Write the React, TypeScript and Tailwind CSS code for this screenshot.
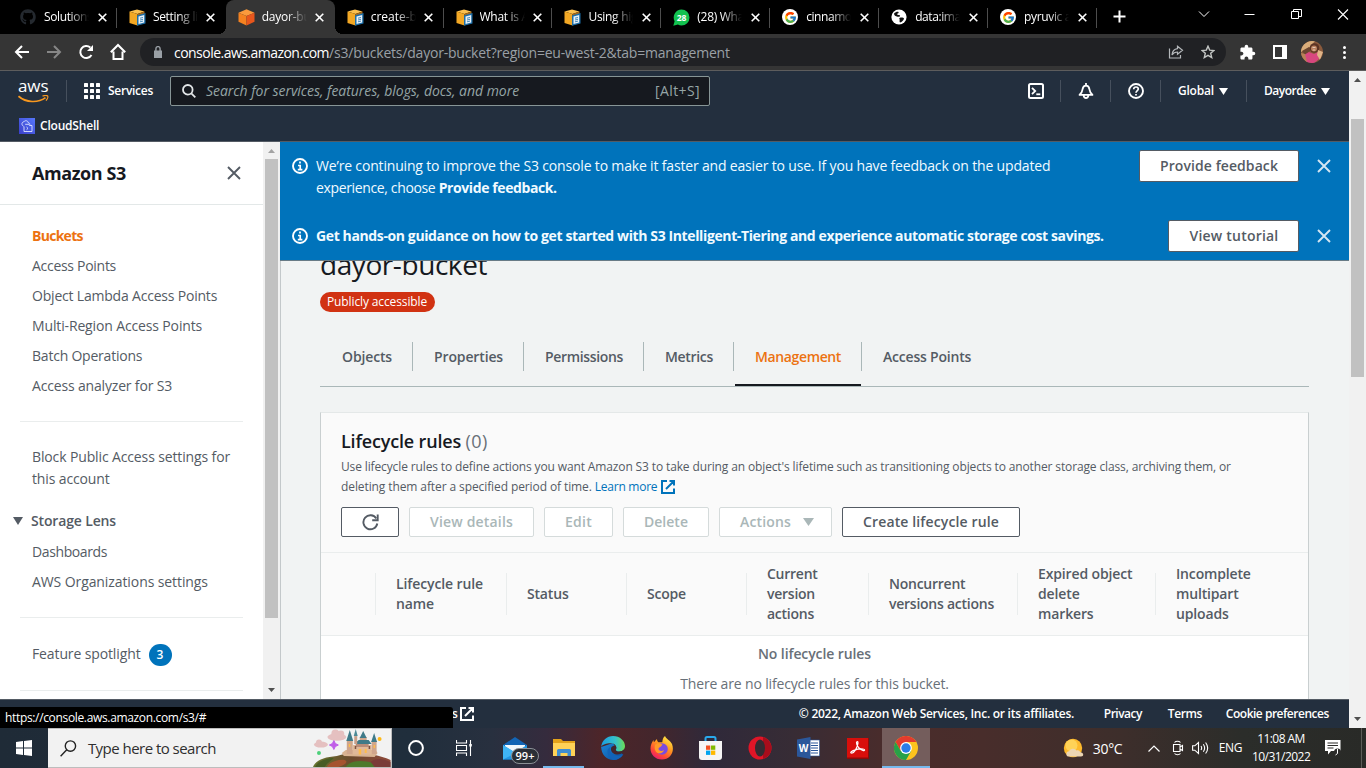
import type { ReactNode } from 'react';
import { FaGithub } from 'react-icons/fa';
import { FcGoogle } from 'react-icons/fc';
import { MdExtension } from 'react-icons/md';

/* ---------- browser chrome ---------- */

const DocsIcon = () => (
  <svg width="17" height="17" viewBox="0 0 17 17" className="block shrink-0">
    <path d="M0.500 2.500 8 0.500 15.500 2.500 8.500 5z" fill="#fbc04e" />
    <path d="M0.500 2.500 8.500 5v11.500L0.500 14z" fill="#f3a824" />
    <path d="M8.500 5 15.500 2.500v11L8.500 16.500z" fill="#a86a1b" />
    <path d="M8 6.500 16.500 4v10.500L8 16.800z" fill="#1c6ea8" />
    <path d="M9.500 7.500 15.200 6v7.500L9.500 15z" fill="#e8f2fa" />
    <path d="M11 9.200l3-.7M11 11l3-.7M11 12.800l3-.7" stroke="#1c6ea8" strokeWidth="0.800" />
  </svg>
);
const CubeIcon = () => (
  <svg width="17" height="17" viewBox="0 0 17 17" className="block shrink-0">
    <path d="M8.500 0.300 16.500 3.800 8.500 7 0.500 3.800z" fill="#fb9a3c" />
    <path d="M0.500 3.800 8.500 7v9.500L0.500 12.800z" fill="#f58220" />
    <path d="M16.500 3.800 8.500 7v9.500l8-3.700z" fill="#e8561c" />
  </svg>
);
const WhatsIcon = () => (
  <svg width="17" height="17" viewBox="0 0 17 17" className="block shrink-0">
    <path d="M8.500 0.500a8 8 0 0 1 0 16 8 8 0 0 1-3.600-.9L0.300 16.700l1.300-4.500A8 8 0 0 1 8.500 0.500z" fill="#12c24f" />
    <text x="8.500" y="11.500" fontSize="8.500" fontWeight="700" fill="#fff" textAnchor="middle" fontFamily="Open Sans, sans-serif">28</text>
  </svg>
);
const GoogleIcon = () => (
  <span className="flex size-4 shrink-0 items-center justify-center rounded-full bg-white">
    <FcGoogle size={13} />
  </span>
);
const GlobeIcon = () => (
  <svg width="16" height="16" viewBox="0 0 16 16" className="block shrink-0">
    <circle cx="8" cy="8" r="7.600" fill="#fff" />
    <path d="M3 4.500c1.500-1.500 3.500-2 4.500-1.500.5 1-.5 1.500-1.500 2 .5 1.500 2 .5 3 1.500.5 1-1 1.500-2.500 1.200C4.500 7.300 3 6.500 3 4.500zM8.500 9c1.500-.8 4-.5 4.500.5-.5 2-2 3.500-4 4-.8-1-.3-2-.3-2.700C8.600 10.200 8 9.700 8.500 9z" fill="#111" />
  </svg>
);
const GithubIcon = () => <FaGithub size={16} className="shrink-0 text-[#24292f]" />;

type BrowserTab = { icon: ReactNode; title: string; track: string; line?: boolean; active?: boolean };
const browserTabs: BrowserTab[] = [
  { icon: <GithubIcon />, title: 'Solutions', track: 'tracking-[-0.38px]', line: true },
  { icon: <DocsIcon />, title: 'Setting life', track: 'tracking-[-0.3px]' },
  { icon: <CubeIcon />, title: 'dayor-buc', track: 'tracking-[-0.25px]', active: true },
  { icon: <DocsIcon />, title: 'create-buc', track: 'tracking-[0px]', line: true },
  { icon: <DocsIcon />, title: 'What is Am', track: 'tracking-[-0.3px]', line: true },
  { icon: <DocsIcon />, title: 'Using high', track: 'tracking-[-0.3px]', line: true },
  { icon: <WhatsIcon />, title: '(28) What', track: 'tracking-[-0.3px]', line: true },
  { icon: <GoogleIcon />, title: 'cinnamon', track: 'tracking-[-0.45px]', line: true },
  { icon: <GlobeIcon />, title: 'data:image', track: 'tracking-[-0.4px]', line: true },
  { icon: <GoogleIcon />, title: 'pyruvic ac', track: 'tracking-[-0.34px]', line: true },
];

const TabStrip = () => (
  <div className="flex h-[34px] items-stretch bg-black pl-2 text-white">
    {browserTabs.map((t) => (
      <div
        key={t.title}
        className={`relative flex w-[108.900px] shrink-0 items-center pl-3 ${t.active ? 'rounded-t-lg bg-[#353535]' : ''}`}
      >
        {t.active && (
          <>
            <span className="absolute bottom-0 -left-2 size-2 bg-[radial-gradient(circle_at_0_0,transparent_8px,#353535_8px)]" />
            <span className="absolute -right-2 bottom-0 size-2 bg-[radial-gradient(circle_at_100%_0,transparent_8px,#353535_8px)]" />
          </>
        )}
        <span className="flex w-6 shrink-0">{t.icon}</span>
        <span className={`w-[45px] overflow-hidden text-[12px] leading-[34px] whitespace-nowrap [mask-image:linear-gradient(to_right,#000_55%,transparent_100%)] ${t.track}`}>
          {t.title}
        </span>
        <svg width="9" height="9" viewBox="0 0 9 9" className="ml-[8.500px] shrink-0">
          <path d="M0.700 0.700l7.600 7.600M8.300 0.700L0.700 8.300" stroke="#fff" strokeWidth="1.600" />
        </svg>
        {t.line && <span className="absolute top-2 right-0 h-5 w-px bg-[#4d4d4d]" />}
      </div>
    ))}
    <svg width="13" height="13" viewBox="0 0 13 13" className="mt-[10px] ml-4">
      <path d="M6.500 0.500v12M0.500 6.500h12" stroke="#fff" strokeWidth="2" />
    </svg>
    <div className="ml-auto flex pr-[17px]">
      <svg width="12" height="34" viewBox="0 0 12 34" className="mr-[34px]"><path d="M1 11.500l5 5 5-5" fill="none" stroke="#fff" /></svg>
      <svg width="11" height="34" viewBox="0 0 11 34" className="mr-9"><path d="M0.500 14.500h10" stroke="#fff" /></svg>
      <svg width="11" height="34" viewBox="0 0 11 34" className="mr-[35px]"><path d="M0.500 11.500h7v7h-7zM2.500 11.500v-2h8v7h-3" fill="none" stroke="#fff" /></svg>
      <svg width="12" height="34" viewBox="0 0 12 34"><path d="M1 9.500l10 10M11 9.500l-10 10" stroke="#fff" strokeWidth="1.100" /></svg>
    </div>
  </div>
);

const Avatar = () => (
  <svg width="22" height="22" viewBox="0 0 22 22" className="block">
    <clipPath id="face"><circle cx="11" cy="11" r="11" /></clipPath>
    <g clipPath="url(#face)">
      <path d="M0 0h22v22H0z" fill="#8a5a3c" />
      <path d="M0 5l8-5h6l-5 6-9 5z" fill="#d9ad7a" />
      <path d="M1 10l7-4 2 3-6 5z" fill="#6b4630" />
      <circle cx="13.500" cy="7" r="4.800" fill="#5c3424" />
      <circle cx="13" cy="7.600" r="3" fill="#b9805e" />
      <path d="M11.500 6.500h3M11.800 9h2.400" stroke="#f0d9c8" strokeWidth="0.800" />
      <path d="M3 14l5-3 5 2 4-2 1 7-6 5-7-1z" fill="#d8477f" />
      <path d="M17 9l5 2-3 8-3-5z" fill="#e0b487" />
      <path d="M0 12l4 1 2 8H0z" fill="#b98158" />
    </g>
  </svg>
);

const Toolbar = () => (
  <div className="flex h-[37px] items-center border-b border-[#5d5d5d] bg-[#353535] pr-5 pl-[14px]">
    <svg width="112" height="20" viewBox="0 0 112 20" fill="none" stroke="#fff" strokeWidth="2">
      <path d="M15 10H2.500M8 4l-6 6 6 6" />
      <path d="M33 10h12.500M40 4l6 6-6 6" stroke="#868686" />
      <path d="M77.500 13A6 6 0 1 1 76.300 5.500" />
      <path d="M79 3v6h-6z" fill="#fff" stroke="none" />
      <path d="M99.500 9.500v7.500h9V9.500M96.800 10.200L104 3l7.200 7.200" />
    </svg>
    <div className="ml-[14px] flex h-7 w-[1086px] items-center rounded-full bg-[#202124] pr-[11px] pl-[14px] text-[14px] whitespace-nowrap">
      <svg width="8" height="12" viewBox="0 0 8 12"><path d="M0 4.500h8V12H0z" fill="#9aa0a6" /><path d="M1.900 5V2.700a2.100 2.100 0 0 1 4.200 0V5" fill="none" stroke="#9aa0a6" strokeWidth="1.400" /></svg>
      <span className="ml-3 tracking-[-0.53px] text-white">console.aws.amazon.com</span>
      <span className="tracking-[-0.22px] text-[#9aa0a6]">/s3/buckets/dayor-bucket?region=eu-west-2&amp;tab=management</span>
      <svg width="16" height="16" viewBox="0 0 16 16" className="ml-auto" fill="none" stroke="#b4b7ba" strokeWidth="1.200">
        <path d="M1.500 4.500v9.500h11v-3" />
        <path d="M9.500 2.200l5 4-5 4V8C7 8 5.200 9 4 11c.3-3.500 2.500-6 5.500-6.300z" />
      </svg>
      <svg width="14" height="14" viewBox="0 0 14 14" className="ml-[17px]" fill="none" stroke="#c4c7c5" strokeWidth="1.400">
        <path d="M7 1.200l1.700 3.900 4.200.4-3.200 2.800 1 4.200L7 10.300l-3.700 2.200 1-4.200L1.100 5.500l4.200-.4z" />
      </svg>
    </div>
    <MdExtension size={17} className="ml-[13px] text-white" />
    <svg width="14" height="14" viewBox="0 0 14 14" className="ml-[17px]"><path d="M1 1h12v12H1z" fill="none" stroke="#fff" strokeWidth="2" /><path d="M9 0h5v14H9z" fill="#fff" /></svg>
    <div className="ml-[14px]"><Avatar /></div>
    <svg width="3" height="13" viewBox="0 0 3 13" className="ml-auto" fill="#fff"><circle cx="1.500" cy="1.500" r="1.500" /><circle cx="1.500" cy="6.500" r="1.500" /><circle cx="1.500" cy="11.500" r="1.500" /></svg>
  </div>
);

/* ---------- AWS header ---------- */

const Rule = ({ gap }: { gap: string }) => <span className={`h-[22px] w-px bg-[#46505d] ${gap}`} />;
const Caret = ({ className = '' }: { className?: string }) => (
  <svg width="9" height="7" viewBox="0 0 9 7" className={className}><path d="M0 0h9L4.500 7z" fill="currentColor" /></svg>
);

const AwsHeader = () => (
  <header className="h-[71px] shrink-0 border-b border-[#545b64] bg-[#232f3e] text-white">
    <div className="flex h-10 items-center pl-[18px]">
      <div className="w-[31px]">
        <div className="h-[15px] text-[17px] leading-[12px] font-medium tracking-[-0.1px]">aws</div>
        <svg width="31" height="8" viewBox="0 0 31 8" className="block" fill="none" stroke="#f7981f" strokeWidth="1.700">
          <path d="M0.500 1.200C8 7.800 20 8.200 27.500 2.600" />
          <path d="M24.500 1.200c2-.8 4.600-.7 5.200 0 .4.700-.3 3-1.700 4.400" strokeWidth="1.300" />
        </svg>
      </div>
      <Rule gap="ml-[17px]" />
      <svg width="16" height="16" viewBox="0 0 16 16" className="ml-[17px]" fill="#fff">
        {[0, 6, 12].map((y) => [0, 6, 12].map((x) => <rect key={`${x}${y}`} x={x} y={y} width="4" height="4" rx="0.600" />))}
      </svg>
      <span className="ml-2 w-[62px] text-[12px] font-semibold tracking-[-0.27px]">Services</span>
      <div className="flex h-[30px] w-[540px] items-center rounded-[2px] border border-[#879596] bg-[#16191f] pr-[9px] pl-[11px] text-[14px] whitespace-nowrap text-[#95a5a6]">
        <svg width="14" height="14" viewBox="0 0 14 14" fill="none" stroke="#e3e6e8" strokeWidth="1.800"><circle cx="5.800" cy="5.800" r="4.800" /><path d="M9.300 9.300l4 4" /></svg>
        <span className="mb-px ml-[10px] tracking-[-0.04px] italic">Search for services, features, blogs, docs, and more</span>
        <span className="mb-px ml-auto tracking-[0.38px]">[Alt+S]</span>
      </div>
      <svg width="16" height="16" viewBox="0 0 16 16" className="ml-[318px]" fill="none" stroke="#fff" strokeWidth="2"><rect x="1" y="1" width="14" height="14" rx="1.500" /><path d="M4 4.800l3.200 3.200L4 11.200" strokeWidth="1.800" /><path d="M8.300 11.300h4" strokeWidth="1.800" /></svg>
      <Rule gap="ml-4" />
      <svg width="16" height="16" viewBox="0 0 16 16" className="ml-[17px]" fill="none" stroke="#fff" strokeWidth="1.800"><path d="M8 0v2.200M.8 11.800h14.400M1.800 11.500C4.200 9.500 4.200 8 4.500 6.300 4.900 4.100 6.200 2.600 8 2.600s3.100 1.500 3.500 3.700c.3 1.700.3 3.200 2.700 5.200M5.600 12.300c.2 1.600 1 2.700 2.400 2.700s2.200-1.100 2.400-2.700" /></svg>
      <Rule gap="ml-4" />
      <svg width="16" height="16" viewBox="0 0 16 16" className="ml-[17px]" fill="none" stroke="#fff" strokeWidth="1.900"><circle cx="8" cy="8" r="7" /><path d="M5.700 6.300C5.700 4.900 6.600 4 8 4s2.300.9 2.300 2.100C10.300 7.500 8 7.700 8 9.800" strokeWidth="1.700" /><path d="M8 10.900v1.600" strokeWidth="1.700" /></svg>
      <Rule gap="ml-4" />
      <span className="ml-[17px] w-[41px] text-[12px] font-semibold tracking-[-0.22px]">Global</span>
      <Caret />
      <Rule gap="ml-[18px]" />
      <span className="ml-[17px] w-[57px] text-[12px] font-semibold tracking-[-0.5px]">Dayordee</span>
      <Caret />
    </div>
    <div className="flex h-[30px] items-center pl-[19px]">
      <svg width="16" height="16" viewBox="0 0 16 16" fill="none" stroke="#dfe3ff" strokeWidth="0.900">
        <defs><linearGradient id="cs" x1="0" y1="1" x2="1" y2="0"><stop stopColor="#3b3fc9" /><stop offset="1" stopColor="#5577fb" /></linearGradient></defs>
        <path d="M0 0h16v16H0z" fill="url(#cs)" stroke="none" />
        <path d="M4.500 8.300C2.300 7 2.500 4.200 4.800 3.800c1.400-1.900 4.300-1.100 4.500 1 1.200.1 1.700.9 1.600 1.900M5 8.500v5h8V7.500h-2.500L9.800 6.300H6.200M7.500 9l1.500 1.400-1.500 1.400" />
      </svg>
      <span className="ml-[5px] text-[12px] font-semibold tracking-[-0.2px]">CloudShell</span>
    </div>
  </header>
);

/* ---------- sidebar ---------- */

const CloseX = ({ className }: { className: string }) => (
  <svg width="14" height="14" viewBox="0 0 14 14" className={className} fill="none" stroke="currentColor" strokeWidth="1.900"><path d="M1 1l12 12M13 1L1 13" /></svg>
);

const links = [
  { label: 'Buckets', cls: 'font-bold text-[#ec7211] tracking-[-0.72px]' },
  { label: 'Access Points', cls: 'tracking-[-0.29px]' },
  { label: 'Object Lambda Access Points', cls: 'tracking-[-0.2px]' },
  { label: 'Multi-Region Access Points', cls: 'tracking-[-0.14px]' },
  { label: 'Batch Operations', cls: 'tracking-[-0.22px]' },
  { label: 'Access analyzer for S3', cls: 'tracking-[-0.17px]' },
];
const Divider = ({ gap }: { gap: string }) => <div className={`mr-5 ml-5 h-px bg-[#eaeded] ${gap}`} />;

const Sidebar = () => (
  <aside className="flex w-[281px] shrink-0 overflow-hidden border-r border-[#c3c8ca] bg-white text-[14px] leading-[22px] text-[#545b64]">
    <div className="w-[263px] whitespace-nowrap">
      <div className="flex h-[63px] items-center justify-between border-b border-[#e3e8e8] pr-[22px] pl-8">
        <span className="text-[18px] font-bold tracking-[-0.42px] text-[#16191f]">Amazon S3</span>
        <CloseX className="text-[#545b64]" />
      </div>
      <nav className="flex flex-col gap-2 pt-5 pl-8">
        {links.map((l) => <a key={l.label} className={l.cls}>{l.label}</a>)}
      </nav>
      <Divider gap="mt-6" />
      <div className="pt-6 pl-8 tracking-[-0.13px]">Block Public Access settings for<br />this account</div>
      <div className="mt-5 flex items-center pl-[13px] font-semibold">
        <svg width="10" height="8" viewBox="0 0 10 8"><path d="M0 0h10L5 8z" fill="#545b64" /></svg>
        <span className="ml-2 tracking-[-0.15px]">Storage Lens</span>
      </div>
      <div className="mt-[9px] pl-8 tracking-[-0.39px]">Dashboards</div>
      <div className="mt-2 pl-8 tracking-[-0.09px]">AWS Organizations settings</div>
      <Divider gap="mt-6" />
      <div className="mt-[25px] flex items-center pl-8">
        <span className="mb-px tracking-[-0.12px]">Feature spotlight</span>
        <span className="ml-2 flex h-[22px] w-[23px] items-center justify-center rounded-full bg-[#0073bb] text-[12px] font-semibold text-white">3</span>
      </div>
      <Divider gap="mt-6" />
    </div>
    <div className="flex w-[17px] flex-col items-center bg-[#f1f1f1]">
      <svg width="7" height="4" viewBox="0 0 7 4" className="mt-[7px]"><path d="M0 4h7L3.500 0z" fill="#a3a3a3" /></svg>
      <div className="mt-[6px] h-[459px] w-[13px] bg-[#c1c1c1]" />
      <svg width="7" height="4" viewBox="0 0 7 4" className="mt-[70px]"><path d="M0 0h7L3.500 4z" fill="#505050" /></svg>
    </div>
  </aside>
);

/* ---------- main content ---------- */

const InfoIcon = () => (
  <svg width="16" height="16" viewBox="0 0 16 16" className="mt-[3px] shrink-0" fill="none" stroke="#fff" strokeWidth="1.900"><circle cx="8" cy="8" r="7" /><path d="M8 3.500v2M6 7.500h2.200v4M5.800 11.700h4.600" strokeWidth="1.700" /></svg>
);

const Flashbar = () => (
  <div className="relative z-10 -ml-px h-[119px] shrink-0 border-b border-[#687b86] bg-[#0073bb] pl-3 text-[14px] leading-[22px] whitespace-nowrap text-[#f1faff]">
    <div className="flex h-[70px] items-start pt-[13px]">
      <InfoIcon />
      <p className="ml-2 w-[823px] font-medium">
        <span className="tracking-[-0.17px]">We’re continuing to improve the S3 console to make it faster and easier to use. If you have feedback on the updated</span><br />
        <span className="tracking-[-0.36px]">experience, choose </span><b className="font-bold tracking-[-0.4px]">Provide feedback.</b>
      </p>
      <button className="-mt-[5px] h-8 w-[160px] rounded-[2px] border border-[#545b64] bg-white text-center font-semibold tracking-[0.08px] text-[#545b64]">Provide feedback</button>
      <CloseX className="mt-1 ml-[18px] text-[#d4e6f2]" />
    </div>
    <div className="flex items-start pt-[13px]">
      <InfoIcon />
      <p className="ml-2 w-[852px] font-bold tracking-[-0.38px]">Get hands-on guidance on how to get started with S3 Intelligent-Tiering and experience automatic storage cost savings.</p>
      <button className="-mt-[5px] h-8 w-[131px] rounded-[2px] border border-[#545b64] bg-white pl-px text-center font-semibold tracking-[0.21px] text-[#545b64]">View tutorial</button>
      <CloseX className="mt-1 ml-[18px] text-[#d4e6f2]" />
    </div>
  </div>
);

const pageTabs = [
  { label: 'Objects', cls: 'w-[93px] pl-[22px] tracking-[-0.14px] border-r' },
  { label: 'Properties', cls: 'w-[111px] pl-[21px] tracking-[-0.13px] border-r' },
  { label: 'Permissions', cls: 'w-[120px] pl-[21px] tracking-[-0.34px] border-r' },
  { label: 'Metrics', cls: 'w-[90px] pl-[21px] tracking-[-0.32px] border-r' },
  { label: 'Management', cls: 'w-[128px] pl-[21px] tracking-[-0.37px] border-r text-[#ec7211]', active: true },
  { label: 'Access Points', cls: 'w-[128px] pl-[21px] tracking-[-0.21px]' },
];

const actions = [
  { label: 'View details', cls: 'w-[125px] tracking-[0.18px]' },
  { label: 'Edit', cls: 'w-[69px] tracking-[0.26px]' },
  { label: 'Delete', cls: 'w-[86px] tracking-[0.02px]' },
];

const columns = [
  { lines: ['Lifecycle rule', 'name'], cls: 'w-[131px] tracking-[-0.11px]' },
  { lines: ['Status'], cls: 'w-[120px] tracking-[-0.18px]' },
  { lines: ['Scope'], cls: 'w-[120px] tracking-[-0.2px]' },
  { lines: ['Current', 'version', 'actions'], cls: 'w-[122px] tracking-[-0.25px]' },
  { lines: ['Noncurrent', 'versions actions'], cls: 'w-[149px] tracking-[-0.25px]' },
  { lines: ['Expired object', 'delete', 'markers'], cls: 'w-[138px] tracking-[-0.13px]' },
  { lines: ['Incomplete', 'multipart', 'uploads'], cls: 'w-[152px] tracking-[-0.16px]' },
];

const External = ({ size, className }: { size: number; className: string }) => (
  <svg width={size} height={size} viewBox="0 0 14 14" className={className} fill="none" stroke="currentColor" strokeWidth="2"><path d="M6 1H1v12h12V8.500M8.500 1H13v4.500M13 1L5 9" /></svg>
);

const Main = () => (
  <main className="flex min-w-0 flex-1 flex-col bg-[#f1f3f3] whitespace-nowrap">
    <Flashbar />
    <div className="shrink-0 pr-10 pl-[39px]">
      <h1 className="-mt-[15px] h-[36px] text-[28px] leading-[36px] tracking-[-0.43px] text-[#16191f]">dayor-bucket</h1>
      <div className="mt-[10px] flex h-5 w-[115px] items-center rounded-full bg-[#d13212] pl-[7px] text-[12px] font-medium tracking-[-0.12px] text-white">Publicly accessible</div>
      <div className="mt-[30px] flex h-[45px] border-b border-[#aab7b8] text-[14px] leading-[29px] font-semibold text-[#545b64]">
        {pageTabs.map((t) => (
          <div key={t.label}>
            <div className={`h-[29px] border-[#aab7b8] ${t.cls}`}>{t.label}</div>
            {t.active && <div className="mt-[13px] ml-px h-[2px] w-[126px] bg-[#16191f]" />}
          </div>
        ))}
      </div>
      <section className="mt-[25px] h-[300px] border border-[#c9cfd0] border-t-[#e4e8e8] bg-white">
        <div className="h-[140px] border-b border-[#eaeded] bg-[#fafafa] pt-[17px] pl-5">
          <h2 className="text-[18px] leading-[22px] font-semibold tracking-[-0.17px] text-[#16191f]">Lifecycle rules <span className="font-normal tracking-[0.36px] text-[#687078]">(0)</span></h2>
          <p className="mt-[5px] text-[12px] leading-5 text-[#545b64]">
            <span className="tracking-[-0.13px]">Use lifecycle rules to define actions you want Amazon S3 to take during an object's lifetime such as transitioning objects to another storage class, archiving them, or</span><br />
            <span className="tracking-[-0.1px]">deleting them after a specified period of time. </span>
            <a className="tracking-[-0.25px] text-[#0073bb]">Learn more <External size={14} className="ml-px inline-block align-[-3px]" /></a>
          </p>
          <div className="mt-[10px] flex gap-[10px] text-[14px] leading-[28px] font-semibold">
            <div className="flex h-[30px] w-[58px] items-center justify-center rounded-[2px] border border-[#545b64] bg-white">
              <svg width="17" height="17" viewBox="0 0 17 17" fill="none" stroke="#545b64" strokeWidth="1.900"><path d="M15.300 9.500A7 7 0 1 1 14.300 4.500" /><path d="M15.700 0.500v5.700h-5.500" /></svg>
            </div>
            {actions.map((a) => (
              <div key={a.label} className={`h-[30px] rounded-[2px] border border-[#d5dbdb] bg-white text-center text-[#aab7b8] ${a.cls}`}>{a.label}</div>
            ))}
            <div className="flex h-[30px] w-[113px] items-center rounded-[2px] border border-[#d5dbdb] bg-white pl-5 tracking-[0.16px] text-[#aab7b8]">
              Actions<svg width="11" height="8" viewBox="0 0 11 8" className="ml-[12px]"><path d="M0 0h11L5.500 8z" fill="#aab7b8" /></svg>
            </div>
            <div className="h-[30px] w-[178px] rounded-[2px] border border-[#545b64] bg-white text-center tracking-[0.13px] text-[#545b64]">Create lifecycle rule</div>
          </div>
        </div>
        <div className="flex h-[83px] items-center border-b border-[#eaeded] bg-[#fafafa] pl-[54px] text-[14px] leading-5 font-semibold text-[#545b64]">
          {columns.map((c) => (
            <div key={c.lines[0]} className={`flex h-[42px] items-center border-l border-[#eaeded] pl-5 ${c.cls}`}>
              <div>{c.lines.map((l) => <div key={l}>{l}</div>)}</div>
            </div>
          ))}
        </div>
        <div className="pt-[7px] text-center text-[14px] leading-[22px] text-[#687078]">
          <div className="font-semibold tracking-[-0.1px]">No lifecycle rules</div>
          <div className="mt-2 tracking-[-0.16px]">There are no lifecycle rules for this bucket.</div>
        </div>
      </section>
    </div>
  </main>
);

const Footer = () => (
  <footer className="relative z-10 flex h-[29px] shrink-0 items-center border-t border-[#545b64] bg-[#232f3e] pl-[452px] text-[12px] font-semibold whitespace-nowrap text-white">
    <span>s</span>
    <External size={14} className="ml-[2px]" />
    <span className="ml-[325px] w-[305px] tracking-[-0.27px]">© 2022, Amazon Web Services, Inc. or its affiliates.</span>
    <span className="w-16 tracking-[-0.52px]">Privacy</span>
    <span className="w-[58px] tracking-[-0.4px]">Terms</span>
    <span className="tracking-[-0.49px]">Cookie preferences</span>
    <div className="absolute bottom-0 left-0 flex h-[21px] w-[453px] items-center rounded-tr-[3px] bg-black pl-[5px] font-normal tracking-[-0.34px]">https://console.aws.amazon.com/s3/#</div>
  </footer>
);

/* ---------- taskbar ---------- */

const Castle = () => (
  <svg width="78" height="38" viewBox="0 0 78 38" className="block">
    <defs><linearGradient id="hill" x1="0" x2="1"><stop stopColor="#66752f" /><stop offset=".5" stopColor="#6d4a2d" /><stop offset="1" stopColor="#8f4a3b" /></linearGradient></defs>
    <g fill="#e5c0c0"><ellipse cx="8" cy="15.500" rx="7" ry="3" /><circle cx="6" cy="13.500" r="3" /><ellipse cx="24" cy="8" rx="9.500" ry="3.800" /><circle cx="22.500" cy="4.500" r="4" /><circle cx="28" cy="5" r="3.500" /></g>
    <path d="M21 11.500l1.500 3 3 1.500-3 1.500-1.500 3-1.500-3-3-1.500 3-1.500z" fill="#c05fe8" stroke="#c05fe8" />
    <circle cx="6" cy="24" r="2" fill="#4cd07a" /><circle cx="67" cy="10" r="2" fill="#ffb915" />
    <path d="M0 38C3 31 12 28 24 27c14-5 36-4 54 4v7z" fill="url(#hill)" />
    <path d="M14 38c2-5 12-8 18-7 4 2 0 5-6 7z" fill="#a5542f" /><path d="M33 38c4-7 17-7 27-4l4 4z" fill="#4d7a2c" /><path d="M4 35c4-4 13-6 17-6-3 3-7 5-9 9H2z" fill="#475c24" />
    <path d="M58 33c4-4 12-4 20 0v5H62z" fill="#7a3b38" />
    <path d="M29 24l4-3h30l2 3-3 4-31-1z" fill="#d9b391" />
    <path d="M34 11h6v14h-6zM59 12h5v13h-5zM47 8h7v5h-7z" fill="#d0a68c" />
    <path d="M40 16h19v9.500H40z" fill="#e0b999" /><path d="M43 12h13v6H43z" fill="#b98c78" />
    <path d="M37 1l3.500 11h-7zM50.500 2l3.500 7h-7zM61.500 4l3 9h-6zM46 11h10l3 4H42z" fill="#3f7a88" />
    <path d="M43 0l2 7h-4z" fill="#4d8a96" /><path d="M41.500 7h3v8h-3z" fill="#c9a08a" />
    <path d="M36 15h1.500v3H36zM46 20h2.500v5.500H46zM52 20h2v4h-2zM61 16h1.500v3H61z" fill="#ffbc4a" /><path d="M42 17h1.500v3H42zM56 17h1.500v3H56z" fill="#7d5140" />
  </svg>
);

const MailIcon = () => (
  <svg width="24" height="23" viewBox="0 0 24 23"><path d="M0 8L12 0l12 8v14.500H0z" fill="#1365b5" /><path d="M2 8h20v8H2z" fill="#f2f8fc" /><path d="M0 8l12 7.500L24 8v14.500H0z" fill="#2196e3" /><path d="M0 22.500V8l13 8z" fill="#3fb4f5" /></svg>
);
const FolderIcon = () => (
  <svg width="22" height="20" viewBox="0 0 22 20"><path d="M0 1h8l2 2h12v4H0z" fill="#e3a21a" /><path d="M0 5h22v13H0z" fill="#ffd257" /><path d="M4 18v-5.500Q4 11 5.500 11h11q1.500 0 1.500 1.500V18h-3.500v-3h-7v3z" fill="#3f8ed2" /></svg>
);
const EdgeIcon = () => (
  <svg width="24" height="24" viewBox="0 0 24 24">
    <defs><linearGradient id="e1" x1="0" x2="1"><stop stopColor="#1b9de2" /><stop offset=".6" stopColor="#35c1c9" /><stop offset="1" stopColor="#6bdd56" /></linearGradient><linearGradient id="e2" x1="0" y1="0" x2="1" y2="1"><stop stopColor="#1c86d8" /><stop offset="1" stopColor="#0b4f9e" /></linearGradient></defs>
    <path d="M.1 11C.5 19 6 24 12 24c4 0 8-2 10-5.500l-7-6L12 7z" fill="url(#e2)" />
    <path d="M0.100 11C1 4 6 0 12 0c7 0 12 5 12 10 0 3.500-2.500 5.500-5.500 5.500-2.500 0-4-1-3.700-1.800C16 12 15.500 7.500 10.500 7.200 6 7 1.500 8 .1 11z" fill="url(#e1)" />
    <path d="M9 12.500C8 16 12 20 16.500 20c2.500 0 4.500-.8 6-2-2.500 4-6 6-10 6C9 23 6 19 6.500 15c.3-2 1.500-3.500 3.500-4-1 .3-1 1-1 1.500z" fill="#1263b8" />
    <path d="M14.800 13.700c-.3.8 1.200 1.800 3.700 1.800 1.700 0 3.300-.7 4.300-1.900.6 1.700-1.600 5-6.100 5-4.700 0-7.400-3.600-6.600-6.600.6-2 3-3 4.600-1.800.8.900.8 2.200.1 3.500z" fill="#43262c" />
  </svg>
);
const FirefoxIcon = () => (
  <svg width="24" height="24" viewBox="0 0 24 24">
    <defs><linearGradient id="ff" x1=".8" y1="0" x2=".2" y2="1"><stop stopColor="#fff04a" /><stop offset=".4" stopColor="#ff9a1f" /><stop offset=".75" stopColor="#ff4438" /><stop offset="1" stopColor="#e3167c" /></linearGradient></defs>
    <path d="M15 0c1 3 5 4 7 8 3 8-2 15.500-10 15.500C5 23.500.5 18.500.5 12.500.5 9 2 6 3.500 4c0 1 .2 1.800.5 2.300C5 5 6 4 7 3c0 1.500.5 2.500 1.300 3.200h4C12.500 4 13 1.500 15 0z" fill="url(#ff)" />
    <circle cx="12" cy="13" r="5.800" fill="#7a4be0" /><path d="M5 9c2-2 5-2 7.500-.5L11 10.500c-1 1-2.500.7-2.500 2.300 0 2 3 3.200 5.500 1.200-1 4-7 4.500-8.500 1C4.500 13 4.500 11 5 9z" fill="#ff9a28" />
  </svg>
);
const StoreIcon = () => (
  <svg width="23" height="24" viewBox="0 0 23 24"><path d="M6.500 6V2.500q0-1.500 1.500-1.500h7q1.500 0 1.500 1.500V6" fill="none" stroke="#29a9ec" strokeWidth="2" /><path d="M0 5h23v16q0 3-3 3H3q-3 0-3-3z" fill="#f5f5f5" /><path d="M7 9.500h4.300v4.300H7z" fill="#f25022" /><path d="M12 9.500h4.300v4.300H12z" fill="#7fba00" /><path d="M7 14.600h4.300v4.300H7z" fill="#00a4ef" /><path d="M12 14.600h4.300v4.300H12z" fill="#ffb900" /></svg>
);
const OperaIcon = () => (
  <svg width="24" height="24" viewBox="0 0 24 24"><circle cx="12" cy="12" r="11.500" fill="#e01527" /><path d="M15 1c5 1.500 8.500 6 8.500 11S20 21.500 15 23z" fill="#a80d1b" /><ellipse cx="12" cy="12" rx="5" ry="8.600" fill="#352b32" /></svg>
);
const WordIcon = () => (
  <svg width="23" height="22" viewBox="0 0 23 22"><path d="M12 3h10.500v16H12z" fill="#fff" stroke="#2b579a" strokeWidth=".6" /><path d="M14 6h7M14 8.500h7M14 11h7M14 13.500h7M14 16h7" stroke="#2b579a" strokeWidth="1.100" /><path d="M0 2.500L13.500 0v22L0 19.500z" fill="#2b579a" /><text x="6.700" y="14.500" fontSize="10" fontWeight="700" fill="#fff" textAnchor="middle" fontFamily="Open Sans, sans-serif">W</text></svg>
);
const PdfIcon = () => (
  <svg width="22" height="21" viewBox="0 0 22 21"><path d="M0 0h22v21H0z" fill="#8f0a08" /><path d="M0 0h21v19.500H0z" fill="#d80f0b" /><path d="M3.800 14.800c-.5-1.500 6.500-4.500 12-3.800 2.500.3 2.200 1.800.5 1.600-3-.5-7-4.600-6.800-8 .1-1.500 1.600-1.300 1.500.3C10.800 8.500 7 16.500 3.800 14.800z" fill="none" stroke="#fff" strokeWidth="1.200" /></svg>
);
const ChromeIcon = () => (
  <svg width="24" height="24" viewBox="0 0 24 24"><circle cx="12" cy="12" r="12" fill="#fcc31e" /><path d="M12 6h10.400A12 12 0 0 0 1.600 6l5.200 9z" fill="#e33b2e" /><path d="M1.600 6l5.200 9h10.400L12 24A12 12 0 0 1 1.600 6z" fill="#28a148" /><circle cx="12" cy="12" r="5.900" fill="#fff" /><circle cx="12" cy="12" r="4.700" fill="#2a7de8" /></svg>
);

const Slot = ({ children, className = 'w-[49px]' }: { children: ReactNode; className?: string }) => (
  <div className={`flex h-full shrink-0 items-center justify-center ${className}`}>{children}</div>
);

const Taskbar = () => (
  <div className="flex h-10 items-stretch bg-[linear-gradient(90deg,#1f2b37_0%,#202e3c_30%,#28303f_36%,#352b3d_40%,#4d2529_44%,#43262c_48%,#2f293a_52%,#372c35_58%,#4a2c2b_65%,#482d2b_72%,#3d2e2b_82%,#2b2d2a_91%,#292a27_100%)] text-white">
    <div className="flex w-12 shrink-0 items-center justify-center">
      <svg width="16" height="16" viewBox="0 0 16 16" fill="#fff"><path d="M0 2l7-1v6.500H0zM8 .9L16 0v7.500H8zM0 8.500h7V15l-7-1zM8 8.500h8V16l-8-1z" /></svg>
    </div>
    <div className="flex w-[344px] shrink-0 items-center border border-l-0 border-[#bdbdbd] bg-[#f2f2f2] pl-3">
      <svg width="17" height="17" viewBox="0 0 17 17" fill="none" stroke="#222" strokeWidth="1.400"><circle cx="10.500" cy="6" r="5.200" /><path d="M6.800 9.800L.6 16.200" /></svg>
      <span className="ml-[11px] w-[227px] text-[15px] tracking-[-0.53px] whitespace-nowrap text-[#2f2f2f]">Type here to search</span>
      <Castle />
    </div>
    <Slot className="w-[48px]"><svg width="16" height="16" viewBox="0 0 16 16"><circle cx="8" cy="8" r="6.900" fill="none" stroke="#fff" strokeWidth="2" /></svg></Slot>
    <Slot className="w-[48px]"><svg width="16" height="16" viewBox="0 0 16 16" fill="none" stroke="#fff" strokeWidth="1.100"><path d="M.5 0v3h10V0M.5 16v-3h10v3M.5 5.500h10v5H.5zM14.500 0v16" /><path d="M13.300 4h2.500v2.500h-2.500z" fill="#fff" stroke="none" /></svg></Slot>
    <Slot className="w-[51px] pl-[3px]">
      <div className="relative h-[23px] w-6"><MailIcon /><span className="absolute top-[11px] left-[8px] flex h-4 w-7 items-center justify-center rounded-full border border-[#8b9096] bg-[#2a2f36] text-[11px] leading-none font-semibold">99+</span></div>
    </Slot>
    <Slot className="w-[49px] px-1"><div className="flex h-full w-full items-center justify-center border-b-2 border-[#76b9ed] pt-[2px]"><FolderIcon /></div></Slot>
    <Slot><EdgeIcon /></Slot>
    <Slot><FirefoxIcon /></Slot>
    <Slot><StoreIcon /></Slot>
    <Slot><OperaIcon /></Slot>
    <Slot><WordIcon /></Slot>
    <Slot><PdfIcon /></Slot>
    <div className="flex w-12 shrink-0 items-center justify-center border-b-2 border-[#76b9ed] bg-[#745d5c] pt-[2px]"><ChromeIcon /></div>
    <div className="ml-auto flex items-center whitespace-nowrap">
      <svg width="22" height="20" viewBox="0 0 22 20"><circle cx="10" cy="10" r="9.200" fill="#fdb92c" /><circle cx="8.500" cy="7.500" r="6" fill="#ffd257" /><path d="M6 18.500a2.600 2.600 0 0 1 0-5.200 4.500 4.500 0 0 1 7.500-.8c2-.9 3.300.2 3.600 1.700 4 .1 4 4.300.9 4.300z" fill="#ecd5b4" /></svg>
      <span className="ml-2 w-[55px] text-[14px] tracking-[-0.3px]">30°C</span>
      <svg width="12" height="7" viewBox="0 0 12 7" fill="none" stroke="#fff" strokeWidth="1.200"><path d="M.5 6.500L6 1l5.500 5.500" /></svg>
      <svg width="12" height="16" viewBox="0 0 12 16" className="ml-[12px]" fill="none" stroke="#fff" strokeWidth="1.100"><path d="M1.500 4.500h6.500v7H1.500zM8 7l2.500-1.500v5L8 9M2.500 2.500C4 .8 7 .8 8.500 2.500M2.500 13.500C4 15.200 7 15.200 8.500 13.500" /></svg>
      <svg width="17" height="14" viewBox="0 0 17 14" className="ml-2" fill="none" stroke="#fff" strokeWidth="1.100"><path d="M.6 4.800h2.200L6.500 1.500v11L2.800 9.200H.6zM9 5c.8 1.200.8 2.800 0 4M11.300 3.200c1.700 2.400 1.700 5.200 0 7.600M13.600 1.500c2.500 3.300 2.500 7.700 0 11" /></svg>
      <span className="ml-[10px] text-[12px] tracking-[-0.4px]">ENG</span>
      <div className="ml-[10px] w-[58px] text-center text-[12px] leading-[18px] tracking-[-0.55px]"><div>11:08 AM</div><div>10/31/2022</div></div>
      <svg width="17" height="16" viewBox="0 0 17 16" className="ml-[15px]"><path d="M0 0h15.500v11H6l-3 3.500V11H0z" fill="#fff" /><path d="M2.500 3h10.500M2.500 5.500h10.500M2.500 8h6" stroke="#2c2c2a" strokeWidth="1.100" /><circle cx="12.500" cy="12" r="3.500" fill="#2c2c2a" /><path d="M12.500 9v4.500l-2 1.500" stroke="#fff" fill="none" /></svg>
      <span className="mr-1 ml-[19px] h-10 w-px bg-[#5c5c58]" />
    </div>
  </div>
);

const PageScrollbar = () => (
  <div className="flex w-[17px] shrink-0 flex-col items-center bg-[#f1f1f1]">
    <svg width="7" height="4" viewBox="0 0 7 4" className="mt-[7px]"><path d="M0 4h7L3.500 0z" fill="#505050" /></svg>
    <div className="mt-[37px] h-[258px] w-[13px] bg-[#c1c1c1]" />
    <svg width="7" height="4" viewBox="0 0 7 4" className="mt-auto mb-[7px]"><path d="M0 0h7L3.500 4z" fill="#505050" /></svg>
  </div>
);

export default function App() {
  return (
    <div className="flex h-[768px] w-[1366px] flex-col overflow-hidden font-['Open_Sans','Noto_Sans',sans-serif]">
      <TabStrip />
      <Toolbar />
      <div className="flex h-[657px]">
        <div className="flex w-[1349px] flex-col">
          <AwsHeader />
          <div className="flex h-[557px] overflow-hidden">
            <Sidebar />
            <Main />
          </div>
          <Footer />
        </div>
        <PageScrollbar />
      </div>
      <Taskbar />
    </div>
  );
}
